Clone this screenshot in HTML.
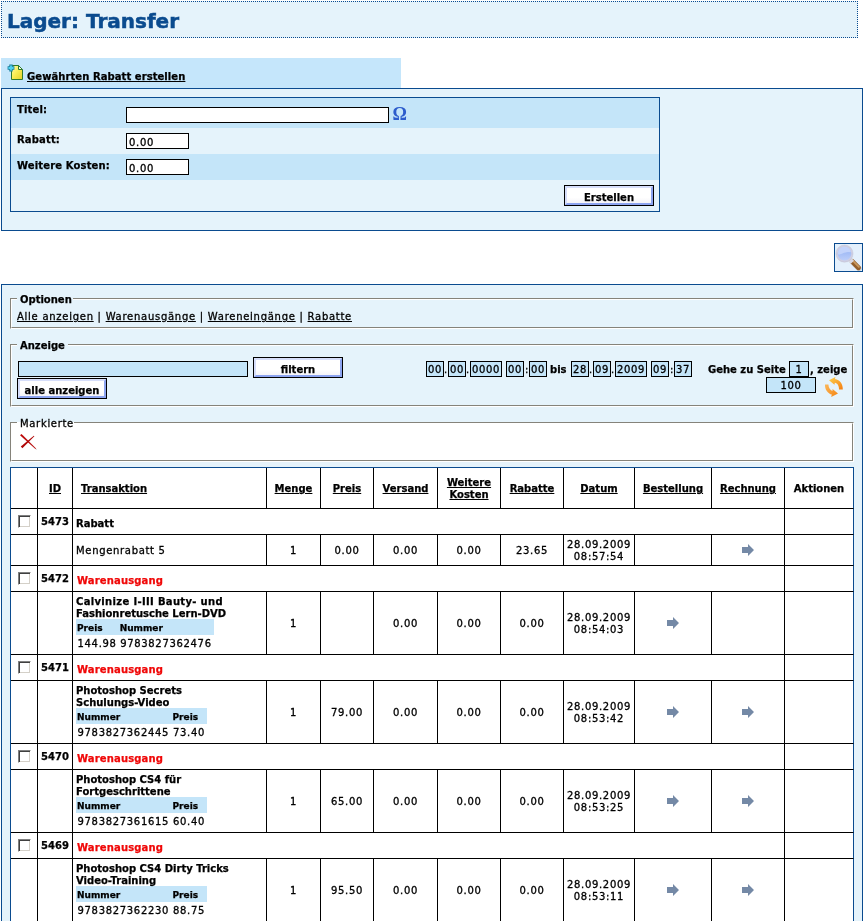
<!DOCTYPE html>
<html><head><meta charset="utf-8"><title>Lager: Transfer</title>
<style>
*{box-sizing:border-box;margin:0;padding:0}
html,body{width:863px;height:921px;overflow:hidden;background:#fff}
body{will-change:transform;position:relative;font-family:"DejaVu Sans","Liberation Sans",sans-serif;font-size:10px;line-height:12px;color:#000}
.abs{position:absolute}
b,.b{font-weight:bold}
.n{font-weight:normal;font-size:10px;letter-spacing:.68px}
a{color:#000;text-decoration:underline}
#hdr{left:1px;top:1px;width:857px;height:37px;border:1px dotted #0a4b8f;background:#e5f3fb}
#hdr h1{position:absolute;left:5px;top:5px;font-size:20px;line-height:28px;font-weight:bold;color:#0a4b8f;letter-spacing:0;-webkit-text-stroke:.5px #0a4b8f}
#bar{left:1px;top:58px;width:400px;height:30px;background:#c5e6fb}
#box1{left:1px;top:88px;width:862px;height:143px;border:1px solid #0a4b8f;background:#e5f3fb}
#form{left:10px;top:97px;width:650px;height:115px;border:1px solid #0a4b8f;background:#e5f3fb}
.row{position:absolute;left:0;width:648px}
.dk{background:#c4e5f9}
.lbl{position:absolute;left:6px;font-weight:bold;letter-spacing:.15px}
.inp{position:absolute;border:1px solid #000;background:#fff;height:16px;font-size:10px;line-height:14px;letter-spacing:.68px;white-space:nowrap;overflow:hidden}
.inb{background:#c4e5f9;text-align:center;padding-top:1px}
.btn{position:absolute;width:90px;height:21px;border:1px solid #000;background:linear-gradient(#fff 60%,#f1f0f6);font-weight:bold;text-align:center;line-height:19px}
.btn i{position:absolute;left:0;top:0;right:0;bottom:0;border:2px solid;border-color:#d6defa #8da4f0 #8da4f0 #d6defa}
.btn span{position:relative;top:2px}
#box2{left:1px;top:284px;width:862px;height:700px;border:1px solid #0a4b8f;background:#e5f3fb}
.fs{position:absolute;left:10px;width:844px;border:2px solid;border-color:#85837a #fff #fff #85837a}
.fs:before{content:"";position:absolute;left:-1px;top:-1px;right:-1px;bottom:-1px;border:1px solid;border-color:#fff #85837a #85837a #fff}
.lg{position:absolute;left:5px;top:-6px;padding:0 3px;background:#e5f3fb;line-height:12px;white-space:nowrap}

#tb{left:10px;top:467px;width:844px;table-layout:fixed;border-collapse:separate;border-spacing:0;border-left:1px solid #0a4b8f;border-top:1px solid #0a4b8f;background:#fff}
#tb>tbody>tr>td,#tb>tbody>tr>th{border-right:1px solid #000;border-bottom:1px solid #000;padding:0;vertical-align:middle;overflow:hidden}
#tb tr.hr{height:41px}
#tb tr.hr th{text-align:center;font-weight:bold;line-height:12px;padding-top:2px}
#tb tr.hr th.l{text-align:left;padding-left:8px}
#tb tr.ir{height:26px}
.c{text-align:center}
.cb{display:inline-block;width:13px;height:13px;background:#fff;border:1px solid;border-color:#808080 #fff #fff #808080;box-shadow:inset 1px 1px 0 #404040, inset -1px -1px 0 #d4d0c8;vertical-align:middle;position:relative;left:0}
.id{font-weight:bold;text-align:center}
.id div{position:relative;top:0px}
.tr{font-weight:bold;padding-left:4px !important}
.tr div{position:relative;top:2px}
.red{color:#f00808;letter-spacing:.15px}
#tb>tbody>tr>td.m{text-align:center;padding-top:2px}
.ds{padding-left:4px !important}
.ds>.n{top:1px}
.ar{display:inline-block;vertical-align:middle;position:relative;top:-1px}
.pt{line-height:12px;white-space:nowrap;position:relative;top:1px;left:-1px}
.it{border-collapse:separate;border-spacing:0;margin-left:-1px;table-layout:fixed}
.it th{background:#c4e5f9;font-weight:bold;font-size:9px;text-align:left;padding:3px 2px 1px 1px;height:16px;line-height:12px}
.it td{padding:2px 0 1px 1.5px;height:16px;line-height:12px;white-space:nowrap}

#tb>tbody>tr>td:last-child,#tb>tbody>tr>th:last-child{border-right-color:#0a4b8f}

.b,b,th,.lbl,.btn,.id,.tr{-webkit-text-stroke:.25px currentColor}
.n,.inp{-webkit-text-stroke:.3px currentColor}
</style></head><body>
<div id="hdr" class="abs"><h1>Lager: Transfer</h1></div>
<div id="bar" class="abs">
  <svg class="abs" style="left:6px;top:6px" width="17" height="17" viewBox="0 0 17 17">
    <defs><linearGradient id="yg" x1="0" y1="0" x2="1" y2="1"><stop offset="0" stop-color="#fffbb0"/><stop offset=".5" stop-color="#f7ec50"/><stop offset="1" stop-color="#e2cf2a"/></linearGradient></defs>
    <path d="M4.5 1.500h7l4 4v10h-11z" fill="url(#yg)" stroke="#2f7a2f" stroke-width="1"/>
    <path d="M11.500 1.500v4h4z" fill="#fafbe6" stroke="#2f7a2f" stroke-width="1" stroke-linejoin="round"/>
    <path d="M4 0.6v6.8M0.6 4h6.8" stroke="#197f9e" stroke-width="3.400"/>
    <path d="M4 1.4v5.2M1.4 4h5.2" stroke="#4fd3ef" stroke-width="1.8"/>
  </svg>
  <a class="abs b" id="t_gew" style="left:26px;top:13px;white-space:nowrap;letter-spacing:.07px" >Gewährten Rabatt erstellen</a>
</div>
<div id="box1" class="abs"></div>
<div id="form" class="abs">
  <div class="row dk" style="top:0;height:30px"></div>
  <div class="row" style="top:30px;height:26px"></div>
  <div class="row dk" style="top:56px;height:26px"></div>
  <div class="lbl" id="l1" style="top:6px">Titel:</div>
  <div class="lbl" id="l2" style="top:36px">Rabatt:</div>
  <div class="lbl" id="l3" style="top:62px">Weitere Kosten:</div>
  <div class="inp" style="left:115px;top:9px;width:263px"></div>
  <div class="abs" id="omega" style="left:381.5px;top:5.5px;font-family:'Liberation Serif','DejaVu Serif',serif;font-size:18px;line-height:20px;color:#2c5ccc;font-weight:bold">Ω</div>
  <div class="inp" style="left:115px;top:35px;width:63px;padding-left:2px;padding-top:2px">0.00</div>
  <div class="inp" style="left:115px;top:61px;width:63px;padding-left:2px;padding-top:2px">0.00</div>
  <div class="btn" style="left:553px;top:87px"><i></i><span>Erstellen</span></div>
</div>
<div id="mag" class="abs" style="left:834px;top:243px;width:29px;height:29px;border:1px solid #0a4b8f;background:#e4f0fc">
  <svg width="27" height="27" viewBox="0 0 27 27" style="position:absolute;left:0;top:0">
    <defs><linearGradient id="lg1" x1="0" y1="0" x2="0" y2="1"><stop offset="0" stop-color="#c4d4fb"/><stop offset="0.45" stop-color="#a4bdf6"/><stop offset="1" stop-color="#bfd0fa"/></linearGradient></defs>
    <path d="M18.2 18.600l5.800 5.800" stroke="#b9b9b9" stroke-width="5.200" stroke-linecap="round" opacity=".6"/>
    <path d="M17 17.300l6.400 6.400" stroke="#94602c" stroke-width="4.800" stroke-linecap="round"/>
    <path d="M17.300 16.200l6.600 6.600" stroke="#c9995f" stroke-width="1.800" stroke-linecap="round"/>
    <path d="M14.800 15.600l2.600 2.600" stroke="#d9d9e3" stroke-width="4.400"/>
    <circle cx="9.500" cy="9.600" r="7.700" fill="url(#lg1)" stroke="#d0cfe2" stroke-width="1.700"/>
    <circle cx="9.500" cy="9.600" r="8.600" fill="none" stroke="#b7b6cc" stroke-width=".5" opacity=".7"/>
    <path d="M3 10.500c3.500.8 5.500-3 13-2.300a6.600 6.600 0 0 0-13 2.300z" fill="#c5d5fb" opacity=".9"/>
  </svg>
</div>

<div id="box2" class="abs"></div>
<div class="fs" style="top:298px;height:31px"><div class="lg b" id="lgo" style="padding-right:1.5px">Optionen</div>
  <div class="abs n" id="links" style="left:5px;top:11px;white-space:nowrap;letter-spacing:.73px"><a>Alle anzeigen</a> | <a>Warenausgänge</a> | <a>Wareneingänge</a> | <a>Rabatte</a></div>
</div>
<div class="fs" style="top:344px;height:63px"><div class="lg b" id="lga">Anzeige</div>
  <div class="inp inb" style="left:6px;top:15px;width:230px"></div>
  <div class="btn" style="left:241px;top:11px"><i></i><span>filtern</span></div>
  <div class="btn" style="left:5px;top:32px"><i></i><span>alle anzeigen</span></div>
  <div class="abs" id="dates" style="left:0;top:15px;width:842px;height:16px">
    <div class="inp inb" style="left:414px;top:0;width:18px">00</div><span class="abs n" style="left:432px;top:3px">.</span>
    <div class="inp inb" style="left:436px;top:0;width:18px">00</div><span class="abs n" style="left:454px;top:3px">.</span>
    <div class="inp inb" style="left:458px;top:0;width:32px">0000</div>
    <div class="inp inb" style="left:494px;top:0;width:18px">00</div><span class="abs n" style="left:513px;top:3px">:</span>
    <div class="inp inb" style="left:517px;top:0;width:18px">00</div>
    <span class="abs b" id="bis" style="left:538px;top:3px">bis</span>
    <div class="inp inb" style="left:559px;top:0;width:18px">28</div><span class="abs n" style="left:577px;top:3px">.</span>
    <div class="inp inb" style="left:581px;top:0;width:18px">09</div><span class="abs n" style="left:599px;top:3px">.</span>
    <div class="inp inb" style="left:603px;top:0;width:32px">2009</div>
    <div class="inp inb" style="left:639px;top:0;width:18px">09</div><span class="abs n" style="left:658px;top:3px">:</span>
    <div class="inp inb" style="left:662px;top:0;width:18px">37</div>
    <span class="abs b" id="gehe" style="left:696px;top:3px;white-space:nowrap">Gehe zu Seite</span>
    <div class="inp inb" style="left:777px;top:0;width:20px">1</div>
    <span class="abs b" id="zeige" style="left:798px;top:3px;white-space:nowrap">, zeige</span>
    <div class="inp inb" style="left:754px;top:16px;width:50px">100</div>
    <svg class="abs" style="left:812px;top:15px" width="20" height="22" viewBox="0 0 20 22">
      <defs><linearGradient id="og" x1="0" y1="0" x2="1" y2="1"><stop offset="0" stop-color="#fdd24a"/><stop offset=".6" stop-color="#f9a02c"/><stop offset="1" stop-color="#f47d10"/></linearGradient>
      <linearGradient id="og2" x1="0" y1="0" x2="1" y2="1"><stop offset="0" stop-color="#fbb85a"/><stop offset="1" stop-color="#f58410"/></linearGradient></defs>
      <path d="M18.8 13.5C19 8 16 3.5 11 2.9L11.4 1 5 4.2l5.5 4.6.3-2C13.5 7.2 15.2 10 15 13.5z" fill="url(#og)"/>
      <path d="M1 8.4C.6 13.5 4 17.5 7.8 18.6l-.6 2.3 6.8-3.3L8.6 13l-.2 2C6 14 4.6 11.500 4.400 8.400z" fill="url(#og2)"/>
    </svg>
  </div>
</div>
<div class="fs" style="top:422px;height:40px;background:#fff"><div class="lg n" id="lgm" style="padding-right:0;background:linear-gradient(#e5f3fb 4px,#fff 4px)">Markierte</div>
  <svg class="abs" style="left:8px;top:10px" width="18" height="18" viewBox="0 0 18 18">
    <path d="M1.200 2.200L2.700 1 17 15.500 16.500 16z" fill="#bbb" opacity=".7"/>
    <path d="M0 1.200L1.500 0 16 14.500 15.500 15z" fill="#c00808"/>
    <path d="M14.400 2.200L13.800 1.800.8 12.600 2.400 14.200z" fill="#b00606"/>
  </svg>
</div>

<table id="tb" class="abs" cellspacing="0">
<colgroup><col style="width:27px"><col style="width:35px"><col style="width:194px"><col style="width:54px"><col style="width:53px"><col style="width:64px"><col style="width:63px"><col style="width:63px"><col style="width:71px"><col style="width:77px"><col style="width:73px"><col style="width:69px"></colgroup>
<tr class="hr"><th></th><th><a>ID</a></th><th class="l"><a>Transaktion</a></th><th><a>Menge</a></th><th><a>Preis</a></th><th><a>Versand</a></th><th><a>Weitere<br>Kosten</a></th><th><a>Rabatte</a></th><th><a>Datum</a></th><th><a>Bestellung</a></th><th><a>Rechnung</a></th><th>Aktionen</th></tr>
<tr class="ir"><td class="c"><span class="cb"></span></td><td class="id"><div>5473</div></td><td colspan="9" class="tr"><div style="left:-1px">Rabatt</div></td><td></td></tr>
<tr style="height:31px"><td></td><td></td><td class="ds"><div class="n" style="position:relative;left:-1px">Mengenrabatt 5</div></td><td class="m n">1</td><td class="m n">0.00</td><td class="m n">0.00</td><td class="m n">0.00</td><td class="m n">23.65</td><td class="m n dt">28.09.2009<br>08:57:54</td><td class="m"></td><td class="m"><svg class="ar" width="12" height="12" viewBox="0 0 12 12"><path d="M0 3h6V0l6 6-6 6V9H0z" fill="#7489a6"/></svg></td><td></td></tr>
<tr class="ir"><td class="c"><span class="cb"></span></td><td class="id"><div>5472</div></td><td colspan="9" class="tr"><div class="red">Warenausgang</div></td><td></td></tr>
<tr style="height:63px"><td></td><td></td><td class="ds"><div class="pt b"><span style="letter-spacing:.33px">Calvinize I-III Bauty- und</span><br>Fashionretusche Lern-DVD</div><table class="it" cellspacing="0" style="width:138px"><tr><th style="width:42.5px">Preis</th><th style="width:95px">Nummer</th></tr><tr><td class="n">144.98</td><td class="n">9783827362476</td></tr></table></td><td class="m n">1</td><td class="m n"></td><td class="m n">0.00</td><td class="m n">0.00</td><td class="m n">0.00</td><td class="m n dt">28.09.2009<br>08:54:03</td><td class="m"><svg class="ar" width="12" height="12" viewBox="0 0 12 12"><path d="M0 3h6V0l6 6-6 6V9H0z" fill="#7489a6"/></svg></td><td class="m"></td><td></td></tr>
<tr class="ir"><td class="c"><span class="cb"></span></td><td class="id"><div>5471</div></td><td colspan="9" class="tr"><div class="red">Warenausgang</div></td><td></td></tr>
<tr style="height:63px"><td></td><td></td><td class="ds"><div class="pt b">Photoshop Secrets<br>Schulungs-Video</div><table class="it" cellspacing="0" style="width:131px"><tr><th style="width:95.5px">Nummer</th><th style="width:35.5px">Preis</th></tr><tr><td class="n">9783827362445</td><td class="n">73.40</td></tr></table></td><td class="m n">1</td><td class="m n">79.00</td><td class="m n">0.00</td><td class="m n">0.00</td><td class="m n">0.00</td><td class="m n dt">28.09.2009<br>08:53:42</td><td class="m"><svg class="ar" width="12" height="12" viewBox="0 0 12 12"><path d="M0 3h6V0l6 6-6 6V9H0z" fill="#7489a6"/></svg></td><td class="m"><svg class="ar" width="12" height="12" viewBox="0 0 12 12"><path d="M0 3h6V0l6 6-6 6V9H0z" fill="#7489a6"/></svg></td><td></td></tr>
<tr class="ir"><td class="c"><span class="cb"></span></td><td class="id"><div>5470</div></td><td colspan="9" class="tr"><div class="red">Warenausgang</div></td><td></td></tr>
<tr style="height:63px"><td></td><td></td><td class="ds"><div class="pt b">Photoshop CS4 für<br>Fortgeschrittene</div><table class="it" cellspacing="0" style="width:131px"><tr><th style="width:95.5px">Nummer</th><th style="width:35.5px">Preis</th></tr><tr><td class="n">9783827361615</td><td class="n">60.40</td></tr></table></td><td class="m n">1</td><td class="m n">65.00</td><td class="m n">0.00</td><td class="m n">0.00</td><td class="m n">0.00</td><td class="m n dt">28.09.2009<br>08:53:25</td><td class="m"><svg class="ar" width="12" height="12" viewBox="0 0 12 12"><path d="M0 3h6V0l6 6-6 6V9H0z" fill="#7489a6"/></svg></td><td class="m"><svg class="ar" width="12" height="12" viewBox="0 0 12 12"><path d="M0 3h6V0l6 6-6 6V9H0z" fill="#7489a6"/></svg></td><td></td></tr>
<tr class="ir"><td class="c"><span class="cb"></span></td><td class="id"><div>5469</div></td><td colspan="9" class="tr"><div class="red">Warenausgang</div></td><td></td></tr>
<tr style="height:63px"><td></td><td></td><td class="ds"><div class="pt b">Photoshop CS4 Dirty Tricks<br>Video-Training</div><table class="it" cellspacing="0" style="width:131px"><tr><th style="width:95.5px">Nummer</th><th style="width:35.5px">Preis</th></tr><tr><td class="n">9783827362230</td><td class="n">88.75</td></tr></table></td><td class="m n">1</td><td class="m n">95.50</td><td class="m n">0.00</td><td class="m n">0.00</td><td class="m n">0.00</td><td class="m n dt">28.09.2009<br>08:53:11</td><td class="m"><svg class="ar" width="12" height="12" viewBox="0 0 12 12"><path d="M0 3h6V0l6 6-6 6V9H0z" fill="#7489a6"/></svg></td><td class="m"><svg class="ar" width="12" height="12" viewBox="0 0 12 12"><path d="M0 3h6V0l6 6-6 6V9H0z" fill="#7489a6"/></svg></td><td></td></tr>
</table>
</body></html>
